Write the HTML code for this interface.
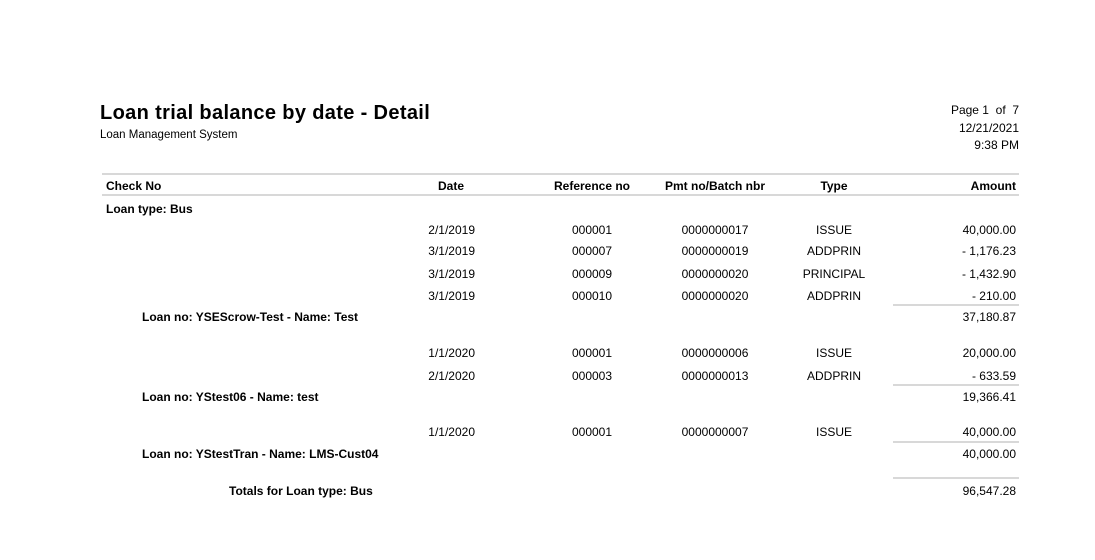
<!DOCTYPE html><html><head><style>
body{margin:0;width:1095px;height:560px;background:#fff;font-family:"Liberation Sans",sans-serif;color:#000;position:relative;overflow:hidden}
div{position:absolute;white-space:nowrap;font-size:12px;line-height:14px}
.b{font-weight:bold}
.r{text-align:right}
.c{text-align:center}
.ln{height:2px;background:#d8d8d8}
</style></head><body>
<div class="b" style="left:100px;top:101px;font-size:20px;line-height:24px;letter-spacing:0.35px">Loan trial balance by date - Detail</div>
<div style="left:100px;top:128px;font-size:11.5px">Loan Management System</div>
<div class="r" style="right:76px;top:103px;width:120px">Page 1&nbsp; of&nbsp; 7</div>
<div class="r" style="right:76px;top:121px;width:120px">12/21/2021</div>
<div class="r" style="right:76px;top:138px;width:120px">9:38 PM</div>
<div class="ln" style="left:102px;top:173px;width:917px"></div>
<div class="ln" style="left:102px;top:194px;width:917px"></div>
<div class="b" style="left:106px;top:179px">Check No</div>
<div class="b r" style="left:364px;width:100px;top:179px">Date</div>
<div class="b c" style="left:532px;width:120px;top:179px">Reference no</div>
<div class="b c" style="left:655px;width:120px;top:179px">Pmt no/Batch nbr</div>
<div class="b c" style="left:774px;width:120px;top:179px">Type</div>
<div class="b r" style="left:900px;width:116px;top:179px">Amount</div>
<div class="b" style="left:106px;top:202px">Loan type: Bus</div>

<script>
var rows=[[223,"2/1/2019","000001","0000000017","ISSUE","40,000.00"],[244,"3/1/2019","000007","0000000019","ADDPRIN","- 1,176.23"],[267,"3/1/2019","000009","0000000020","PRINCIPAL","- 1,432.90"],[289,"3/1/2019","000010","0000000020","ADDPRIN","- 210.00"],[346,"1/1/2020","000001","0000000006","ISSUE","20,000.00"],[369,"2/1/2020","000003","0000000013","ADDPRIN","- 633.59"],[425,"1/1/2020","000001","0000000007","ISSUE","40,000.00"]];
var h="";rows.forEach(function(r){var t=r[0];
h+='<div class="r" style="left:375px;width:100px;top:'+t+'px">'+r[1]+'</div>';
h+='<div class="c" style="left:532px;width:120px;top:'+t+'px">'+r[2]+'</div>';
h+='<div class="c" style="left:655px;width:120px;top:'+t+'px">'+r[3]+'</div>';
h+='<div class="c" style="left:774px;width:120px;top:'+t+'px">'+r[4]+'</div>';
h+='<div class="r" style="left:880px;width:136px;top:'+t+'px">'+r[5]+'</div>';});
document.write(h);
</script>
<div class="ln" style="left:893px;top:304px;width:126px"></div>
<div class="b" style="left:142px;top:310px">Loan no: YSEScrow-Test - Name: Test</div>
<div class="r" style="left:880px;width:136px;top:310px">37,180.87</div>
<div class="ln" style="left:893px;top:384px;width:126px"></div>
<div class="b" style="left:142px;top:390px">Loan no: YStest06 - Name: test</div>
<div class="r" style="left:880px;width:136px;top:390px">19,366.41</div>
<div class="ln" style="left:893px;top:441px;width:126px"></div>
<div class="b" style="left:142px;top:447px">Loan no: YStestTran - Name: LMS-Cust04</div>
<div class="r" style="left:880px;width:136px;top:447px">40,000.00</div>
<div class="ln" style="left:893px;top:477px;width:126px"></div>
<div class="b" style="left:229px;top:484px">Totals for Loan type: Bus</div>
<div class="r" style="left:880px;width:136px;top:484px">96,547.28</div>
</body></html>
